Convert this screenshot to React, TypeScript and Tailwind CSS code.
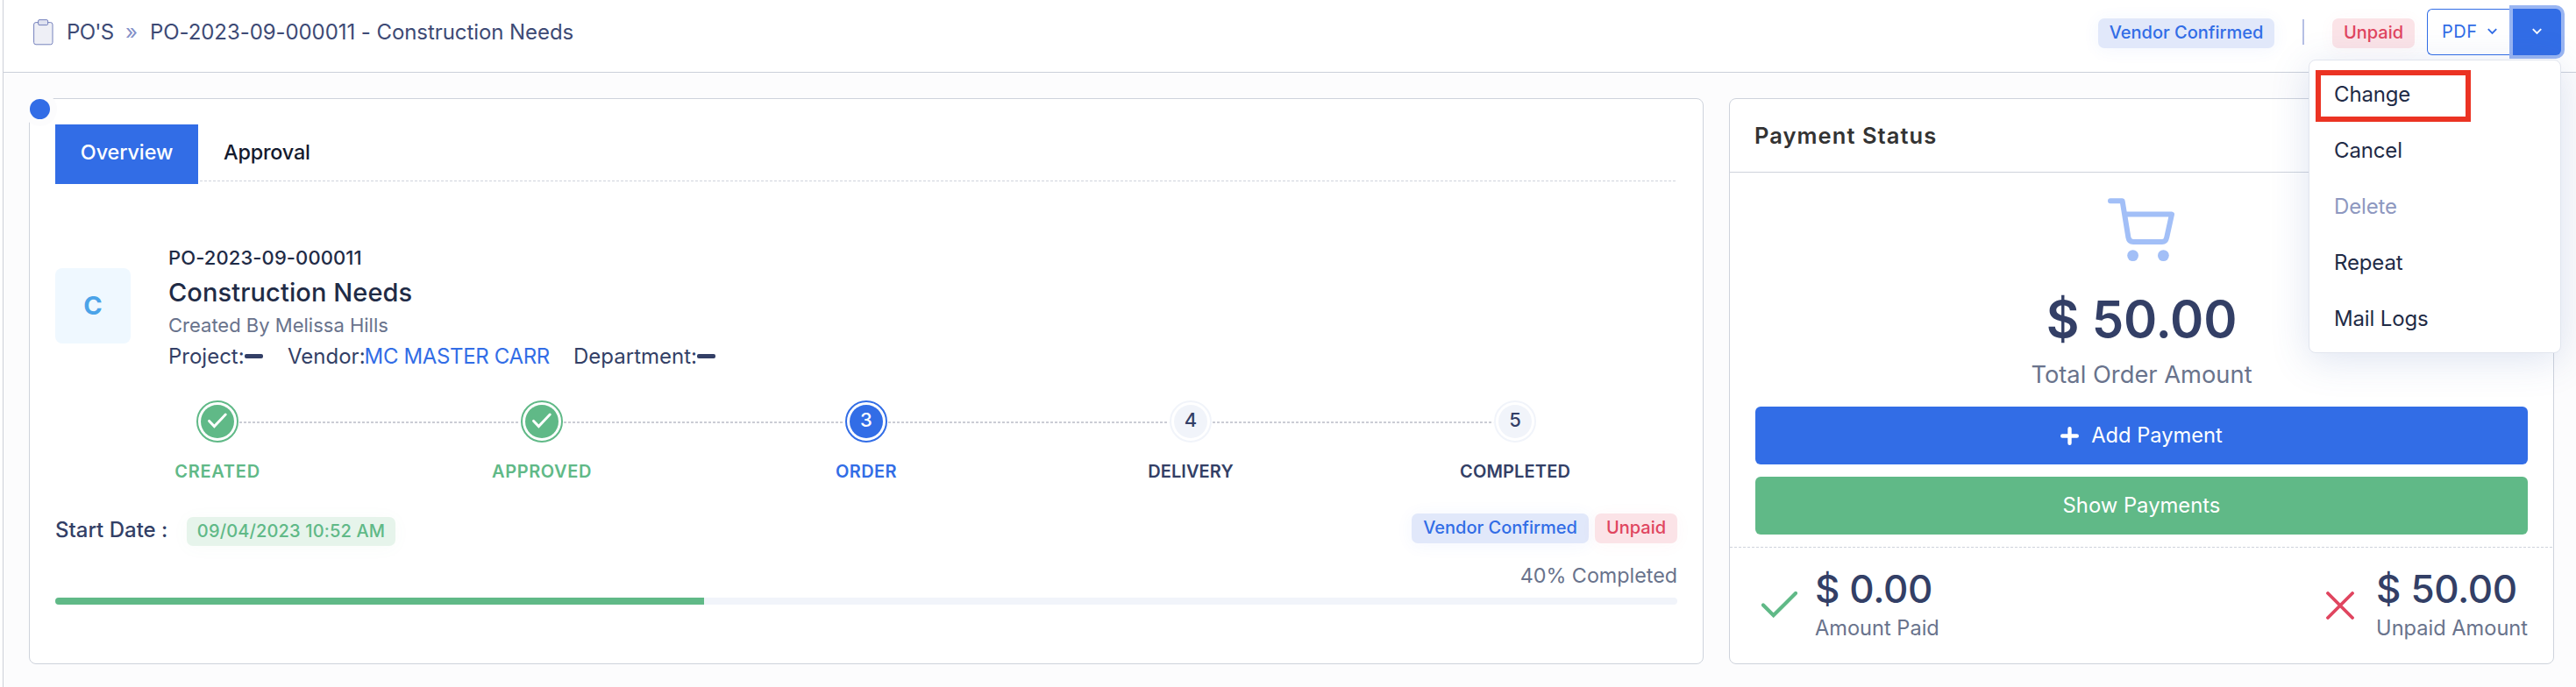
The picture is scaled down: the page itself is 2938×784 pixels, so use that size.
import type { ReactNode } from "react";
import clsx from "clsx";

const MENU_ITEMS = [
  { label: "Change" },
  { label: "Cancel" },
  { label: "Delete", disabled: true },
  { label: "Repeat" },
  { label: "Mail Logs" },
];

type StepState = "done" | "active" | "todo";

const STEPS: { label: string; state: StepState; tracking: string }[] = [
  { label: "CREATED", state: "done", tracking: "tracking-[0.75px]" },
  { label: "APPROVED", state: "done", tracking: "tracking-[0.6px]" },
  { label: "ORDER", state: "active", tracking: "tracking-[0.4px]" },
  { label: "DELIVERY", state: "todo", tracking: "tracking-[0.1px]" },
  { label: "COMPLETED", state: "todo", tracking: "tracking-[0.15px]" },
];

const PROGRESS = 40;

export default function App() {
  return (
    <div className="flex h-[784px] w-[2938px] overflow-hidden bg-white font-['Inter',sans-serif] text-[#333f66]">
      <div className="ml-[3px] flex flex-1 flex-col border-l border-[#cdd0d8]">
        <Header />
        <main className="flex flex-1 items-start gap-[29px] bg-[#fcfcfd] pt-[29px] pl-[29px]">
          <OrderCard />
          <PaymentCard />
        </main>
      </div>
    </div>
  );
}

function Header() {
  return (
    <header className="flex h-[83px] items-center border-b border-[#cbd0da] bg-white pr-[17px] pb-[9px] pl-[34px]">
      <ClipboardIcon />
      <nav className="ml-[15px] flex flex-1 items-center text-[24px] leading-[30px] text-[#3d4a75]">
        <span className="w-[67px] tracking-[-0.7px]">PO'S</span>
        <span className="w-[28px] text-[#8390c8]">»</span>
        <span className="tracking-[-0.07px]">
          PO-2023-09-000011 - Construction Needs
        </span>
      </nav>
      <Tag tone="blue" className="mt-[3px] h-[34px] w-[201px]">
        Vendor Confirmed
      </Tag>
      <span className="mb-px ml-[32px] h-[29px] w-[2px] bg-[#b5bfe4]" />
      <Tag tone="red" className="mt-[3px] ml-[32px] h-[34px] w-[94px]">
        Unpaid
      </Tag>
      <div className="relative ml-[14px] flex h-[53px]">
        <button className="flex w-[98px] items-center gap-[11px] rounded-l-[6px] border border-r-0 border-[#326de6] pb-[2px] pl-[16px] text-[20px] tracking-[0.5px] text-[#326de6]">
          PDF
          <ChevronIcon />
        </button>
        <button className="flex w-[55px] items-center justify-center rounded-r-[6px] bg-[#326de6] pb-[2px] text-white shadow-[0_0_0_4px_#99b5f2]">
          <ChevronIcon />
        </button>
        <ActionMenu />
      </div>
    </header>
  );
}

function ActionMenu() {
  return (
    <div className="absolute top-[58px] right-0 z-10 h-[335px] w-[288px] rounded-[8px] border border-[#e1e5ee] bg-white pt-[7px] shadow-[0_8px_44px_rgba(60,95,170,0.17)]">
      {MENU_ITEMS.map((m) => (
        <div
          key={m.label}
          className={clsx(
            "flex h-[64px] items-center pl-[28px] text-[24px] tracking-[-0.15px]",
            m.disabled ? "text-[#8e98c0]" : "text-[#1f2b46]"
          )}
        >
          {m.label}
        </div>
      ))}
      <div className="absolute top-[11px] left-[7px] h-[59px] w-[177px] border-[6px] border-[#eb3323]" />
    </div>
  );
}

function OrderCard() {
  return (
    <section className="relative h-[646px] w-[1910px] rounded-[8px] border border-[#ced3dc] bg-white px-[29px] pt-[29px]">
      <span className="absolute top-[-8px] left-[-8px] size-[39px] rounded-full border-[8px] border-[#fcfcfd] bg-[#326de6]" />

      <div className="flex h-[68px] text-[23.4px]">
        <div className="flex w-[163px] items-center justify-center bg-[#326de6] pb-[5px] font-medium tracking-[-0.1px] text-white">
          Overview
        </div>
        <div className="ml-[2px] flex h-[65px] flex-1 items-center bg-[repeating-linear-gradient(90deg,#cfd3dc_0_3px,transparent_3px_5px)] bg-[length:100%_1px] bg-bottom bg-no-repeat pb-[2px] pl-[27px] font-medium tracking-[-0.2px] text-[#131a2e]">
          Approval
        </div>
      </div>

      <div className="mt-[68px] flex h-[148px]">
        <div className="mt-[28px] flex size-[86px] items-center justify-center rounded-[8px] bg-[#eff8ff] text-[29px] font-bold text-[#4ba3e8]">
          C
        </div>
        <div className="ml-[43px]">
          <p className="text-[22px] leading-[33px] font-medium tracking-[0.1px] text-[#1f2b46]">
            PO-2023-09-000011
          </p>
          <p className="text-[29px] leading-[45px] font-medium tracking-[0.1px] text-[#1f2b46]">
            Construction Needs
          </p>
          <p className="text-[22px] leading-[31px] text-[#69738c]">
            Created By Melissa Hills
          </p>
          <div className="flex text-[24px] leading-[39px]">
            <Detail label="Project:" className="w-[136px]" />
            <Detail label="Vendor:" className="w-[326px]">
              <a className="ml-[-1px] tracking-[-0.35px] text-[#326de6]">
                MC MASTER CARR
              </a>
            </Detail>
            <Detail label="Department:" />
          </div>
        </div>
      </div>

      <Stepper />

      <div className="mt-[35px] flex h-[37px] items-start">
        <span className="w-[150px] text-[24px] leading-[37px] font-medium">
          Start Date :
        </span>
        <Tag tone="green" className="mt-[4px] h-[33px] w-[238px]">
          09/04/2023 10:52 AM
        </Tag>
        <div className="ml-auto flex gap-[7px]">
          <Tag tone="blue" className="h-[34px] w-[202px]">
            Vendor Confirmed
          </Tag>
          <Tag tone="red" className="h-[34px] w-[94px]">
            Unpaid
          </Tag>
        </div>
      </div>

      <p className="mt-[20px] text-right text-[23.3px] leading-[27px] text-[#69738c]">
        {PROGRESS}% Completed
      </p>
      <div className="mt-[12px] h-[8px] overflow-hidden rounded-[4px] bg-[#f1f4fa]">
        <div
          className="h-full bg-[#60b987]"
          style={{ width: `${PROGRESS}%` }}
        />
      </div>
    </section>
  );
}

function Detail({
  label,
  className,
  children,
}: {
  label: string;
  className?: string;
  children?: ReactNode;
}) {
  return (
    <div className={clsx("flex items-center", className)}>
      <span>{label}</span>
      {children ?? <span className="mb-px h-[5px] w-[21px] rounded-[2px] bg-[#333f66]" />}
    </div>
  );
}

function Stepper() {
  return (
    <div className="relative mt-[31px] grid grid-cols-5">
      <div className="absolute top-[24px] right-[10%] left-[10%] h-[2px] bg-[repeating-linear-gradient(90deg,#cbcdd5_0_3px,transparent_3px_5px)]" />
      {STEPS.map((s, i) => (
        <div key={s.label} className="relative flex flex-col items-center">
          <div
            className={clsx(
              "flex size-[48px] items-center justify-center rounded-full border-2 bg-white p-[3px] shadow-[0_0_0_1px_#fff]",
              s.state === "done" && "border-[#60b987]",
              s.state === "active" && "border-[#326de6]",
              s.state === "todo" && "border-[#f1f4fa]"
            )}
          >
            <div
              className={clsx(
                "flex size-full items-center justify-center rounded-full pb-[3px] text-[22px] font-medium",
                s.state === "done" && "bg-[#60b987] text-white",
                s.state === "active" && "bg-[#326de6] text-white",
                s.state === "todo" && "bg-[#f1f4fa]"
              )}
            >
              {s.state === "done" ? <StepCheck /> : i + 1}
            </div>
          </div>
          <span
            className={clsx(
              "mt-[21px] text-[20px] leading-[25px] font-semibold",
              s.tracking,
              s.state === "done" && "text-[#60b987]",
              s.state === "active" && "text-[#326de6]"
            )}
          >
            {s.label}
          </span>
        </div>
      ))}
    </div>
  );
}

function PaymentCard() {
  return (
    <section className="h-[646px] w-[941px] rounded-[8px] border border-[#ced3dc] bg-white">
      <h2 className="border-b border-[#ced3dc] pl-[28px] text-[25.5px] leading-[83px] font-semibold tracking-[1.05px] text-[#333]">
        Payment Status
      </h2>
      <div className="flex flex-col items-center px-[29px] pt-[29px]">
        <CartIcon />
        <p className="mt-[22px] text-[58px] leading-[88px] font-semibold tracking-[-0.2px]">
          $ 50.00
        </p>
        <p className="pt-px text-[27.3px] leading-[38px] text-[#69738c]">
          Total Order Amount
        </p>
        <button className="mt-[17px] flex h-[66px] w-full items-center justify-center gap-[14px] rounded-[6px] bg-[#326de6] text-[23.7px] text-white">
          <PlusIcon />
          Add Payment
        </button>
        <button className="mt-[14px] h-[66px] w-full rounded-[6px] bg-[#60b987] text-[23.8px] text-white">
          Show Payments
        </button>
      </div>
      <div className="mt-[14px] h-px bg-[repeating-linear-gradient(90deg,#cfd3dc_0_3px,transparent_3px_5px)]" />
      <div className="flex justify-between pt-[22px] pr-[29px] pl-[36px]">
        <Amount icon={<PaidIcon />} value="$ 0.00" label="Amount Paid" />
        <Amount icon={<UnpaidIcon />} value="$ 50.00" label="Unpaid Amount" />
      </div>
    </section>
  );
}

function Amount({
  icon,
  value,
  label,
}: {
  icon: ReactNode;
  value: string;
  label: string;
}) {
  return (
    <div className="flex">
      {icon}
      <div>
        <p className="text-[44px] leading-[50px] font-medium tracking-[-0.4px]">
          {value}
        </p>
        <p className="pt-px text-[23.6px] leading-[38px] text-[#69738c]">
          {label}
        </p>
      </div>
    </div>
  );
}

function Tag({
  tone,
  className,
  children,
}: {
  tone: "blue" | "red" | "green";
  className?: string;
  children: ReactNode;
}) {
  return (
    <span
      className={clsx(
        "flex items-center justify-center rounded-[7px] pb-[2px] text-[20px] font-medium",
        tone === "blue" &&
          "bg-[#e1e8fa] text-[#326de6] shadow-[0_2px_20px_rgba(50,109,230,0.06)]",
        tone === "red" &&
          "bg-[#fbe3e7] text-[#e0455f] shadow-[0_2px_20px_rgba(224,69,95,0.04)]",
        tone === "green" &&
          "bg-[#e6f4eb] tracking-[0.15px] text-[#60b987] shadow-[0_2px_20px_rgba(96,185,135,0.04)]",
        className
      )}
    >
      {children}
    </span>
  );
}

function ClipboardIcon() {
  return (
    <svg width="23" height="30" viewBox="0 0 23 30" fill="#eeeff6" stroke="#7682bd">
      <rect x="0.6" y="3.6" width="21.4" height="25.2" rx="2.4" />
      <rect x="5.6" y="0.6" width="11" height="6" rx="1.4" fill="#dfe2f0" />
    </svg>
  );
}

function ChevronIcon() {
  return (
    <svg width="11" height="8" viewBox="0 0 11 8" fill="none" stroke="currentColor" strokeWidth="1.9">
      <path d="M0.8 1.2 5.5 5.9l4.7-4.7" />
    </svg>
  );
}

function StepCheck() {
  return (
    <svg width="22" height="18" viewBox="0 0 22 18" fill="none" stroke="currentColor" strokeWidth="2.9" strokeLinecap="round">
      <path d="M1.6 9.4 7.4 15.6 20.2 2" />
    </svg>
  );
}

function CartIcon() {
  return (
    <svg className="mr-[2px]" width="76" height="72" viewBox="0 0 76 72" fill="none" stroke="#a2bff7" strokeWidth="6" strokeLinecap="round" strokeLinejoin="round">
      <path d="M3 3.2H16.6L23.4 45Q24.3 50 29 50H62Q66.2 50 67.2 45L73 18.6H19.5" />
      <circle cx="28.6" cy="65.6" r="6.4" fill="#a2bff7" stroke="none" />
      <circle cx="63.4" cy="65.6" r="6.4" fill="#a2bff7" stroke="none" />
    </svg>
  );
}

function PlusIcon() {
  return (
    <svg width="21" height="21" viewBox="0 0 21 21" fill="none" stroke="currentColor" strokeWidth="4.4" strokeLinecap="round">
      <path d="M10.5 2.2v16.6M2.2 10.5h16.6" />
    </svg>
  );
}

function PaidIcon() {
  return (
    <svg className="mt-[28px] mr-[20px]" width="41" height="30" viewBox="0 0 41 30" fill="none" stroke="#60b987" strokeWidth="4.2" strokeLinecap="round">
      <path d="M2 15.6 13.7 27.2 39 2" />
    </svg>
  );
}

function UnpaidIcon() {
  return (
    <svg className="mt-[28px] mr-[25px]" width="32" height="32" viewBox="0 0 32 32" fill="none" stroke="#e0455f" strokeWidth="3.8" strokeLinecap="round">
      <path d="M2 2l28 28M30 2 2 30" />
    </svg>
  );
}
